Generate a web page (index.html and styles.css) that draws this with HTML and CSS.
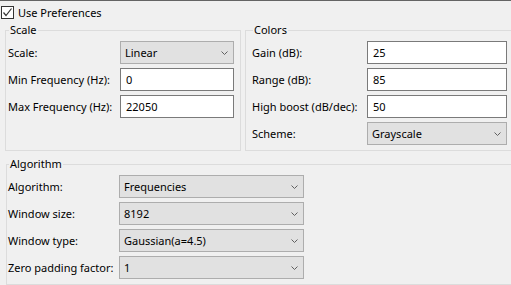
FILE: index.html
```html
<!DOCTYPE html>
<html lang="en">
<head>
  <meta charset="UTF-8">
  <title>Spectrogram Settings</title>
  <link rel="stylesheet" href="styles.css">
</head>
<body>
  <div class="panel">
    <label class="check-row">
      <span class="checkbox">
        <svg width="11" height="11" viewBox="0 0 11 11"><path d="M1.5 5.5 L4 8.5 L9.5 1.5" fill="none" stroke="#333" stroke-width="1.2"/></svg>
      </span>
      Use Preferences
    </label>

    <div class="groups">
      <fieldset class="group scale">
        <legend>Scale</legend>
        <div class="row">
          <span class="lbl">Scale:</span>
          <div class="combo"><span>Linear</span><svg class="chev" width="7" height="4" viewBox="0 0 7 4"><path d="M0.5 0.5 L3.5 3.5 L6.5 0.5" fill="none" stroke="#606060"/></svg></div>
        </div>
        <div class="row">
          <span class="lbl">Min Frequency (Hz):</span>
          <input type="text" value="0">
        </div>
        <div class="row">
          <span class="lbl">Max Frequency (Hz):</span>
          <input type="text" value="22050">
        </div>
      </fieldset>

      <fieldset class="group colors">
        <legend>Colors</legend>
        <div class="row">
          <span class="lbl">Gain (dB):</span>
          <input type="text" value="25">
        </div>
        <div class="row">
          <span class="lbl">Range (dB):</span>
          <input type="text" value="85">
        </div>
        <div class="row">
          <span class="lbl">High boost (dB/dec):</span>
          <input type="text" value="50">
        </div>
        <div class="row">
          <span class="lbl">Scheme:</span>
          <div class="combo"><span>Grayscale</span><svg class="chev" width="7" height="4" viewBox="0 0 7 4"><path d="M0.5 0.5 L3.5 3.5 L6.5 0.5" fill="none" stroke="#606060"/></svg></div>
        </div>
      </fieldset>
    </div>

    <fieldset class="group algorithm">
      <legend>Algorithm</legend>
      <div class="row">
        <span class="lbl">Algorithm:</span>
        <div class="combo"><span>Frequencies</span><svg class="chev" width="7" height="4" viewBox="0 0 7 4"><path d="M0.5 0.5 L3.5 3.5 L6.5 0.5" fill="none" stroke="#606060"/></svg></div>
      </div>
      <div class="row">
        <span class="lbl">Window size:</span>
        <div class="combo"><span>8192</span><svg class="chev" width="7" height="4" viewBox="0 0 7 4"><path d="M0.5 0.5 L3.5 3.5 L6.5 0.5" fill="none" stroke="#606060"/></svg></div>
      </div>
      <div class="row">
        <span class="lbl">Window type:</span>
        <div class="combo"><span>Gaussian(a=4.5)</span><svg class="chev" width="7" height="4" viewBox="0 0 7 4"><path d="M0.5 0.5 L3.5 3.5 L6.5 0.5" fill="none" stroke="#606060"/></svg></div>
      </div>
      <div class="row">
        <span class="lbl">Zero padding factor:</span>
        <div class="combo"><span>1</span><svg class="chev" width="7" height="4" viewBox="0 0 7 4"><path d="M0.5 0.5 L3.5 3.5 L6.5 0.5" fill="none" stroke="#606060"/></svg></div>
      </div>
    </fieldset>
  </div>
</body>
</html>
```

FILE: styles.css
```css
html, body {
  margin: 0;
  background-color: #f0f0f0;
  overflow: hidden;
}
body {
  font-family: 'Noto Sans', sans-serif;
  font-size: 11px;
  color: #000;
  width: 511px;
  height: 285px;
}
.panel {
  border-top: 1px solid #646464;
  width: 560px;
}
.check-row {
  display: flex;
  align-items: center;
  gap: 4px;
  height: 20px;
  padding-left: 1px;
  margin-top: 1px;
}
.checkbox {
  width: 11px;
  height: 11px;
  border: 1px solid #333;
  background: #fff;
  display: flex;
}
.groups {
  display: flex;
  gap: 4px;
  margin-left: 5px;
}
fieldset.group {
  margin: 0;
  border: 1px solid #dcdcdc;
  display: flex;
  flex-direction: column;
  gap: 4px;
  min-width: 0;
  box-sizing: border-box;
}
legend {
  padding: 0 1px;
  margin-left: 1px;
  line-height: 16px;
  height: 16px;
}
.scale {
  width: 236px;
  padding: 3px 6px 5px 2px;
}
.colors {
  width: 300px;
  padding: 3px 6px 5px 6px;
}
.algorithm {
  width: 540px;
  margin: 5px 0 0 6px !important;
  padding: 3px 6px 5px 1px;
}
.row {
  display: flex;
  align-items: center;
  height: 23px;
}
.scale .lbl {
  width: 112px;
}
.colors .lbl {
  width: 115px;
}
.algorithm .lbl {
  width: 111px;
}
input {
  box-sizing: border-box;
  height: 23px;
  border: 1px solid #7a7a7a;
  background: #fff;
  padding: 0 5px;
  font-family: inherit;
  font-size: 11px;
  margin: 0;
  outline: none;
}
.combo {
  box-sizing: border-box;
  height: 23px;
  border: 1px solid #adadad;
  background: #e1e1e1;
  display: flex;
  align-items: center;
  justify-content: space-between;
  padding: 0 5px 0 4px;
}
.scale input, .scale .combo {
  width: 114px;
}
.colors input, .colors .combo {
  width: 140px;
}
.algorithm .combo {
  width: 185px;
}
```
